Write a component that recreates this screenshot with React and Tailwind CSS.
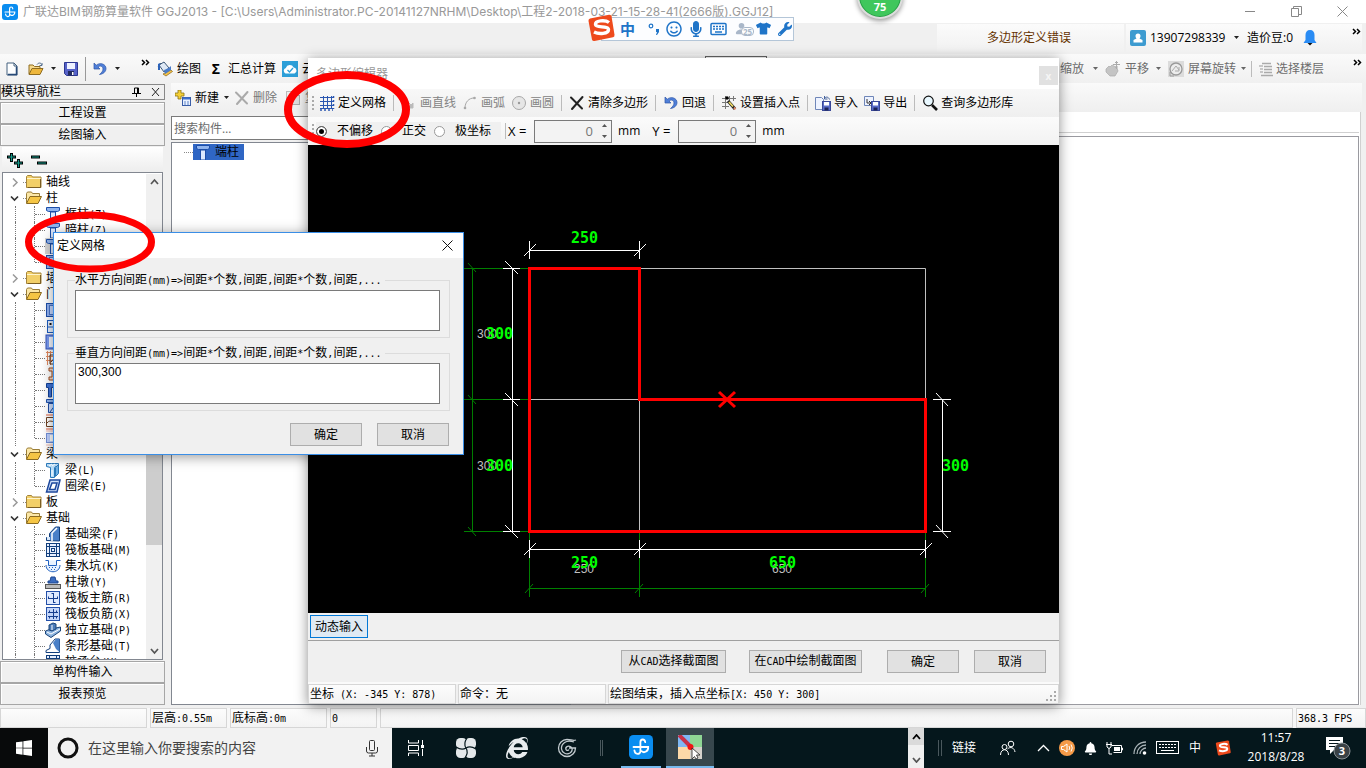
import React from 'react';
import { FaTshirt, FaWrench, FaMicrophone, FaInternetExplorer, FaBell, FaRegSmile } from 'react-icons/fa';
import { BsPersonFill, BsWindows } from 'react-icons/bs';

/* ---------- small helpers ---------- */

// latin runs are set in a narrow mono face, half as wide as the hanzi beside them
function Song({ children }) {
  return String(children).split(/([\x20-\x7e]+)/).map((part, i) =>
    /^[\x20-\x7e]+$/.test(part)
      ? <span key={i} className="font-['DejaVu_Sans_Mono',monospace] text-[10px] whitespace-pre">{part}</span>
      : part
  );
}

function Svg({ w = 16, h = 16, children, className = '' }) {
  return (
    <svg width={w} height={h} viewBox={`0 0 ${w} ${h}`} fill="none" className={`shrink-0 ${className}`} aria-hidden="true">
      {children}
    </svg>
  );
}

const Caret = ({ color = '#222' }) => (
  <Svg w={7} h={4}><path d="M1 0h5L3.500 3z" fill={color} /></Svg>
);

const More = () => (
  <Svg w={9} h={8}><path d="M1 1l2.500 2.500L1 6M5 1l2.500 2.500L5 6" stroke="#000" strokeWidth="1.500" /></Svg>
);

const Sep = () => <span className="mx-1 h-4 w-px shrink-0 bg-[#bbb]" />;

const Grip = () => (
  <Svg w={3} h={16} className="ml-1 mr-px">
    <path d="M1 1v14" stroke="#aaa" strokeWidth="2" strokeDasharray="2 2" />
  </Svg>
);

/* ---------- icons ---------- */

const AppIcon = ({ size = 16 }) => (
  <svg width={size} height={size} viewBox="0 0 16 16" fill="none" className="shrink-0" aria-hidden="true">
    <rect width="16" height="16" rx="3" fill="#0a8df0" />
    <path d="M10.800 4.800c-.2-2.400-3.200-2.400-3.200 0v5.800c0 2.800-3.800 2.600-4-.4M3 8h9.800c.2 2.800-2.600 4.400-4.400 2.800" stroke="#fff" strokeWidth="1.200" strokeLinecap="round" />
  </svg>
);

const NewDoc = () => (
  <Svg><path d="M3 2h7l3 3v9H3z" fill="#fdfeff" stroke="#45607f" /><path d="M10 2v3h3" stroke="#45607f" /><path d="M12.500 5.500v8H4" stroke="#274a78" strokeWidth="1.500" /></Svg>
);

const OpenDoc = () => (
  <Svg><path d="M1 13V4h4l1.500 1.500H12V8" fill="#f7d98a" stroke="#8f6c20" /><path d="M1 13.500L4 7.500h11l-3 6z" fill="#eeb73c" stroke="#8f6c20" /><path d="M9 3.500c1.500-2 4-2 5 .5m0-2v2.500h-2.500" stroke="#56708f" /></Svg>
);

const Save = () => (
  <Svg><path d="M1.500 1.500h13v13h-11l-2-2z" fill="#5662c8" stroke="#2c3690" /><path d="M4 2h8v6H4z" fill="#eef2ff" /><path d="M5 10h6v4.500H5z" fill="#222b60" /><path d="M9 11h1.500v3H9z" fill="#fff" /></Svg>
);

const Undo = () => (
  <Svg><path d="M2 2v6h6L6 6c2-1.800 5-.8 5 2 0 2-1.500 4-3.500 5.500C11.500 13 14 10.500 14 7.500 14 3 8 1 4.300 4.200z" fill="#4f7fd8" stroke="#2c55a8" strokeWidth=".7" /></Svg>
);

const Paint = () => (
  <Svg><path d="M2 4l5-3 5 6-5 4z" fill="#dfe9f5" stroke="#3c5878" /><path d="M2 4v5M4 2L1 6" stroke="#3c5878" /><path d="M1 3l2-1v7H1z" fill="#2c62b8" /><path d="M6 13l8-4 1.500 1.500L9 15z" fill="#f2c14a" stroke="#8a6412" strokeWidth=".7" /><path d="M7 9c2-1 4-1 7-4v4l-6 4z" fill="#4a7cc8" /></Svg>
);

const CloudCheck = () => (
  <Svg><rect width="16" height="16" fill="#2d9fd8" /><path d="M3.500 12.500a3 3 0 01.3-5.600 4.200 4.200 0 017.800-.4 3.100 3.100 0 01.9 6z" fill="#fff" /><path d="M5.500 9l2 2 3.500-4" stroke="#2d9fd8" strokeWidth="1.300" /></Svg>
);

const NewItem = () => (
  <Svg><path d="M3 0h3v3h3v3H6v3H3V6H0V3h3z" fill="#f4cf37" stroke="#8b7414" strokeWidth=".8" /><rect x="7.500" y="7.500" width="8" height="8" fill="#eaf2ff" stroke="#3a5ea8" /><path d="M8 8.500h7" stroke="#3a6fd0" strokeWidth="2" /><path d="M9 12h2m1 0h2m-5 2h2m1 0h2" stroke="#5f84c8" /></Svg>
);

const Cross = ({ color = '#222' }) => (
  <Svg><path d="M2 2.500l11 11M13.500 2L3 14" stroke={color} strokeWidth="2" strokeLinecap="round" /></Svg>
);

const CopyIcon = () => (
  <Svg><rect x="1.500" y="1.500" width="9" height="9" fill="#eee" stroke="#bbb" /><rect x="5.500" y="5.500" width="9" height="9" fill="#ddd" stroke="#aaa" /></Svg>
);

const Hand = () => (
  <Svg><path d="M1 8l3-3 1 1 2-2 2 1 3 2 1 3-3 5H5l-4-4z" fill="#c4c4c4" stroke="#aaa" strokeWidth=".7" /><path d="M11.500 0v8M8 3.500h7M10 1.500h3M10 6h3" stroke="#aaa" /></Svg>
);

const Rotate = () => (
  <Svg><rect width="16" height="16" fill="#dcdcdc" /><circle cx="8" cy="8" r="6" stroke="#999" strokeWidth="1.300" fill="#ececec" /><path d="M4 10l4-5 3 4M11 6v4H7" stroke="#aaa" /><path d="M2 11v4h4" stroke="#999" /></Svg>
);

const Floors = () => (
  <Svg><path d="M4 2.500h9M6 5.500h8M6 8.500h8M6 11.500h8M3 14.500h12" stroke="#aaa" strokeWidth="1.500" /><path d="M1 5h4M2 8h3M2 11h3" stroke="#999" /></Svg>
);

const GridIcon = () => (
  <Svg><path d="M4.500 1v13M8.500 1v13M12.500 1v13M1 2.500h13M1 6.500h13M1 10.500h13M1 13.500h13" stroke="#2a56b0" /><path d="M14.500 1v13M1 15h13" stroke="#2a56b0" strokeWidth="1.500" strokeDasharray="2 2" /></Svg>
);

const LineIcon = () => <Svg><path d="M2 2l9 9M12 8v5H7z" stroke="#bbb" fill="#bbb" /></Svg>;
const ArcIcon = () => <Svg><path d="M3 13C3 7 7 3 12 3" stroke="#a8a8a8" /><circle cx="3" cy="13" r="1.300" fill="#a8a8a8" /><circle cx="12.500" cy="3" r="1.300" fill="#a8a8a8" /></Svg>;
const CircleIcon = () => <Svg><circle cx="8" cy="8" r="6.500" fill="#e6e6e6" stroke="#a8a8a8" /><circle cx="8" cy="8" r="1.200" fill="#999" /></Svg>;

const InsertPoint = () => (
  <Svg><path d="M4.500 1v13M8.500 1v8M1 3.500h14M1 7.500h6M1 11.500h7M12.500 1v5" stroke="#777" /><circle cx="6" cy="3" r="1.800" fill="#000" /><path d="M7 6l7 8" stroke="#222" strokeWidth="3" /><path d="M8 7l4 4.500" stroke="#f0dc66" strokeWidth="1.800" /><path d="M13 12.500l1.500 1.800" stroke="#e08a6a" strokeWidth="2" /></Svg>
);

const ImportIcon = ({ out }) => (
  <Svg><path d={out ? 'M.5 1.500h9v9h-9z' : 'M.5 2.500h6l2 2v10h-8z'} fill="#eef3ff" stroke="#6f86b8" /><rect x="7.500" y="6.500" width="8" height="9" fill="#5a6cc8" stroke="#3a4898" /><rect x="9" y="7" width="5" height="3.500" fill="#fff" /><rect x="9.500" y="12.500" width="4" height="3" fill="#1c2458" />{out ? <path d="M3 4v4h4m-2-2l2 2-2 2" stroke="#333" /> : <path d="M9.500 3.500c1-2 4-2 5 1M9.500 1v3h3" stroke="#45629c" />}</Svg>
);

const Magnifier = () => (
  <Svg><circle cx="6.500" cy="6" r="4.800" fill="#e9f8ff" stroke="#111" strokeWidth="1.200" /><path d="M10 10l5 5" stroke="#111" strokeWidth="2.600" /></Svg>
);

function Chevron({ open }) {
  return open
    ? <Svg w={9} h={9}><path d="M1 2.500l3.500 3.500L8 2.500" stroke="#333" strokeWidth="1.700" /></Svg>
    : <Svg w={9} h={9}><path d="M3 .5l4 4-4 4" stroke="#999" strokeWidth="1.500" /></Svg>;
}

function Folder({ open }) {
  return open ? (
    <Svg><path d="M.5 13V3.500l1-1.500h4l1 1.500h7V7" fill="#fbe7a8" stroke="#9a7d36" /><path d="M.5 13.500L4 6.500h11.500l-3.500 7z" fill="#f5c544" stroke="#8a6a22" /></Svg>
  ) : (
    <Svg><path d="M.5 13.500V2.500l1-1h4l1 1.500h8.500v10.500z" fill="#f2cf68" stroke="#a5843a" /><path d="M1 4.500h13.500" stroke="#fff4cc" /><path d="M14.500 5v8.500H2" stroke="#7c5f24" /></Svg>
  );
}

// drawings for the members in the tree
const memberIcons = {
  column: <><path d="M1.500 1.500h13v3l-2 1h-9l-2-1z" fill="#8fb4ee" stroke="#1d4ea8" /><path d="M5.500 6h5v10h-5z" fill="#dce9ff" stroke="#1d4ea8" /></>,
  box: <><rect x="1.500" y="1.500" width="13" height="13" fill="#8fb0f0" stroke="#1d4ea8" /><rect x="4.500" y="3.500" width="8" height="9" fill="#c5d8ff" stroke="#4a76c8" /></>,
  door: <><rect x="2.500" y="2.500" width="12" height="12" fill="#e8f1ff" stroke="#1d5cc0" /><path d="M2 9h13" stroke="#1d5cc0" /><path d="M4.500 6h2" stroke="#111" strokeWidth="2" /></>,
  windowed: <><rect x="1" y="1" width="14" height="14" fill="#7a9bf0" stroke="#3252b8" /><rect x="4" y="3" width="8" height="10" fill="#f4f7ff" /></>,
  hatch: <><path d="M1 2.500h14M1 6.500h14M1 10.500h14M2.500 1v14M5.500 1v14" stroke="#e08a60" /><path d="M5 14V5h9v9zM6 12l6-7" stroke="#5a3a24" /></>,
  ibeam: <path d="M4 2h11v3h-4v6h4v3H4v-3h3V5H4z" fill="#f8dcc8" stroke="#a04c20" />,
  post: <path d="M1.500 1.500h13v4h-8V15h-3V5.500h-2z" fill="#3f74d8" stroke="#123f94" />,
  lintel: <><path d="M1.500 1.500h13v3h-13z" fill="#8fb4ee" stroke="#1d4ea8" /><path d="M3.500 5.500h11v9h-11zM5 14l6-8" fill="#cfe0ff" stroke="#1d4ea8" /></>,
  slab: <><path d="M1 1h14M1 15h14" stroke="#f0b0a0" strokeWidth="2" /><path d="M1.500 3.500h13v9h-13zM2 9c4-5 6 2 12-4" stroke="#6e4020" /></>,
  panel: <><path d="M1 1h14M1 15h14" stroke="#f0b8b0" /><rect x="1.500" y="3.500" width="13" height="9" fill="#bcd0ff" stroke="#7390d8" /><rect x="5" y="5" width="8" height="6" fill="#fff" /></>,
  beam: <><path d="M1.500 1.500h12v3h-3l-1 1v10h-4v-10l-4-1z" fill="#b8dcf8" stroke="#2a78b8" /><path d="M10.500 5.500l3-3v9l-3 3z" fill="#6fb0e4" stroke="#2a78b8" /><path d="M4 4l3-2M7 4l3-2M7 8v6" stroke="#fff" /></>,
  ring: <path d="M5 2h10l-3 12H1.500zM7 5h5l-2 6.500H4.500z" fill="#cfe0fb" fillRule="evenodd" stroke="#1d479c" strokeWidth="1.500" />,
  foundBeam: <><path d="M1.500 14.500v-3h3v-4l6-6.500h4v14z" fill="#4a80c8" stroke="#123f7c" /><path d="M7 15V7l5-5" stroke="#fff" strokeWidth="1.500" /><path d="M2 14h3v-3H2z" fill="#d8e8fa" /></>,
  raft: <><rect x="1.500" y="1.500" width="13" height="13" fill="#e8f0ff" stroke="#123f7c" /><path d="M1 4.500h14M1 11.500h14M4.500 1v14M11.500 1v14" stroke="#123f7c" /><rect x="6.500" y="6.500" width="3" height="3" stroke="#123f7c" /></>,
  pit: <><path d="M.5 2.500h3v5h8v-5h4M1 7c0 9 14 9 14 0" stroke="#2060c0" fill="#e8f2ff" /><path d="M4 9.500h1m2 0h1m2 0h1M6 11.500h1m2 0h1" stroke="#2060c0" /></>,
  pier: <><path d="M6 3h4l1 4h2v2H3V7h2z" fill="#3a6cc0" stroke="#1d4690" /><rect x=".5" y="10.500" width="15" height="4" fill="#bbb" stroke="#555" /></>,
  mainBar: <><rect x="1.500" y="1.500" width="13" height="13" fill="#dfeaff" stroke="#2450a8" /><path d="M3 8.500h10M3.500 6.500v2M12.500 8.500v-2M8.500 3v10M8.500 3.500h-2M8.500 12.500h2" stroke="#173f90" /></>,
  negBar: <><rect x="1.500" y="1.500" width="13" height="13" fill="#c4d6fa" stroke="#2450a8" /><path d="M3 6.500h10M3 10.500h10M8.500 3v10M4.500 4.500v2M11.500 4.500v2M4.500 10.500v2M11.500 10.500v2" stroke="#173f90" /></>,
  isolated: <><path d="M.5 9L6 7l9.500-2v4L6 15.500.5 12z" fill="#8cb4e0" stroke="#1a4478" /><path d="M4 8V3l4-2 3 1v5l-4 2z" fill="#4a7ab8" stroke="#1a4478" /><path d="M2 10l4 2 9-5M7 3v5" stroke="#fff" /></>,
  strip: <><path d="M1 14.500v-2l4-2V7l5-6h4.500v13.500z" fill="#fff" stroke="#123f7c" /><path d="M8 5l3-4h3.500v13L11 11z" fill="#4a80c8" /></>,
};

const MemberIcon = ({ name }) => <Svg>{memberIcons[name]}</Svg>;

const SogouLogo = ({ size = 28 }) => (
  <svg width={size} height={size} viewBox="0 0 28 28" fill="none" className="relative shrink-0" aria-hidden="true">
    <path d="M3 4.500L22 .8q2-.3 2.500 1.500l3 18.500q.3 2-1.500 2.500L7.500 27q-2 .3-2.500-1.500L1.500 7q-.3-2 1.500-2.500z" fill="#ee4a1c" />
    <path d="M22 8.500C18 5.500 8 6.500 8.500 10.500c.4 3.600 13 1 13 5 0 4.500-9.500 5-14.500 2.500" stroke="#fff" strokeWidth="3.400" />
  </svg>
);

const ImeKeyboard = () => (
  <Svg w={17} h={14}><rect x="1" y="1.500" width="15" height="11" rx="1" stroke="#1e74c8" strokeWidth="1.500" /><path d="M3 4.500h11M3 7h11" stroke="#1e74c8" strokeWidth="1.500" strokeDasharray="2 1" /><path d="M5 10h7" stroke="#1e74c8" strokeWidth="1.500" /></Svg>
);

/* ---------- data ---------- */

const tree = [
  { label: '轴线' },
  { label: '柱', open: true, items: [['column', '框柱(Z)'], ['column', '暗柱(Z)'], ['column', '', true], ['box', '']] },
  { label: '墙' },
  {
    label: '门', open: true,
    items: [['box', ''], ['door', ''], ['windowed', ''], ['hatch', ''], ['ibeam', ''], ['post', ''], ['lintel', ''], ['slab', ''], ['panel', '']],
  },
  { label: '梁', open: true, items: [['beam', '梁(L)'], ['ring', '圈梁(E)']] },
  { label: '板' },
  {
    label: '基础', open: true, more: true,
    items: [
      ['foundBeam', '基础梁(F)'], ['raft', '筏板基础(M)'], ['pit', '集水坑(K)'], ['pier', '柱墩(Y)'],
      ['mainBar', '筏板主筋(R)'], ['negBar', '筏板负筋(X)'], ['isolated', '独立基础(P)'], ['strip', '条形基础(T)'],
      ['raft', '桩承台(V)'],
    ],
  },
];

/* ---------- main window ---------- */

function TitleBar() {
  return (
    <header className="flex h-[23px] shrink-0 items-center bg-white pl-0.5 text-[#999]">
      <AppIcon />
      <h1 className="ml-[5px] font-[Inter,'Noto_Sans_CJK_SC',sans-serif] whitespace-nowrap">
        广联达BIM钢筋算量软件 GGJ2013 - [C:\Users\Administrator.PC-20141127NRHM\Desktop\工程2-2018-03-21-15-28-41(2666版).GGJ12]
      </h1>
      <div className="ml-auto flex items-center gap-[35px] pr-[18px]">
        <button aria-label="最小化"><Svg w={11} h={11}><path d="M0 5.500h10" stroke="#888" /></Svg></button>
        <button aria-label="还原"><Svg w={11} h={11}><path d="M.5 2.500h7v8h-7zM2.500 2.500v-2h8v8h-3" stroke="#888" /></Svg></button>
        <button aria-label="关闭"><Svg w={11} h={11}><path d="M.5.500l10 10M10.500.500l-10 10" stroke="#888" /></Svg></button>
      </div>
    </header>
  );
}

function AccountRow() {
  return (
    <div className="flex h-[31px] shrink-0 justify-end gap-0.5 bg-[#f0f0f0] pr-1 pt-px pb-0.5">
      <div className="flex w-[187px] items-center bg-linear-to-b from-[#fbfbfb] to-[#f1f1f1] pl-[50px] text-[#630]">多边形定义错误</div>
      <div className="flex w-[236px] items-center bg-linear-to-b from-[#fbfbfb] to-[#f1f1f1] pl-1">
        <Svg><rect width="16" height="16" rx="2" fill="#3d9bd0" /><path d="M5.500 6a2.500 2.500 0 015 0c0 1-.5 2-1 2.500l3 1.500v2.500h-9V10l3-1.500C6 8 5.500 7 5.500 6z" fill="#fff" /></Svg>
        <span className="ml-1 w-[79px]">13907298339</span>
        <span className="mr-[7px] ml-1"><Caret /></span>
        <span className="w-[56px]">造价豆:0</span>
        <Svg w={14} h={16}><path d="M7 0C4 0 2.500 2 2.500 5v5L.500 13h13l-2-3V5C11.500 2 10 0 7 0z" fill="#2a8cf4" /><path d="M4.500 13h5L7 15.500z" fill="#111" /></Svg>
        <span className="mr-px mb-3 ml-auto"><More /></span>
      </div>
    </div>
  );
}

function MainToolbar() {
  return (
    <div className="flex h-[29px] shrink-0 bg-linear-to-b from-[#fafafa] to-[#f0f0f0]">
      <div className="flex w-[153px] shrink-0 items-center pl-1">
        <button aria-label="新建"><NewDoc /></button>
        <button aria-label="打开" className="ml-2"><OpenDoc /></button>
        <span className="ml-1.5"><Caret /></span>
        <button aria-label="保存" className="ml-1.5"><Save /></button>
        <span className="ml-1.5 h-6 w-px bg-[#999]" />
        <button aria-label="撤销" className="ml-1.5"><Undo /></button>
        <span className="ml-1.5"><Caret /></span>
        <span className="mb-3 ml-5"><More /></span>
      </div>
      <div className="flex w-[552px] shrink-0 items-center pl-1 whitespace-nowrap">
        <button className="flex items-center gap-1"><Paint />绘图</button>
        <button className="ml-2.5 flex items-center gap-[7px]"><span className="w-2.5 text-sm font-bold">Σ</span>汇总计算</button>
        <button className="ml-1.5 flex items-center gap-1"><CloudCheck />云</button>
      </div>
      <div className="mt-0.5 h-[22px] w-[62px] border border-[#666] bg-white" />
      <div className="ml-auto flex items-center pr-1 text-[#6d6d6d]">
        <button className="flex items-center gap-2">缩放 <Caret color="#666" /></button>
        <button className="ml-1.5 flex items-center gap-1"><Hand />平移 <span className="ml-0.5"><Caret color="#666" /></span></button>
        <button className="ml-1.5 flex items-center gap-1"><Rotate />屏幕旋转<Caret color="#666" /></button>
        <Sep />
        <button className="ml-0.5 flex items-center gap-0.5"><Floors />选择楼层</button>
        <span className="mb-3 ml-[29px]"><More /></span>
      </div>
    </div>
  );
}

const NavButton = ({ children }) => (
  <button className="h-[22px] shrink-0 border border-[#a6a6a6] bg-[#f0f0f0] text-center shadow-[inset_1px_1px_0_#fff]">{children}</button>
);

function TreeGroup({ group }) {
  const items = group.items || [];
  return (
    <li>
      <div className="flex h-4 items-center pl-[7px]">
        <Chevron open={group.open} />
        <span className="ml-1 w-[3px] border-t border-dotted border-[#888]" />
        <Folder open={group.open} />
        <span className="ml-1">{group.label}</span>
      </div>
      {items.length > 0 && (
        <ul>
          {items.map(([icon, label, selected], i) => (
            <li key={i} className="flex h-4 items-center whitespace-nowrap">
              <span className="ml-3 h-4 w-[19px] shrink-0 border-l border-dotted border-[#777]" />
              <span className={`w-[11px] shrink-0 self-start border-l border-dotted border-[#777] ${i === items.length - 1 && !group.more ? 'h-2' : 'h-4'}`}>
                <span className="mt-2 block border-t border-dotted border-[#777]" />
              </span>
              <span className={selected ? 'bg-[#d4d4d4]' : ''}><MemberIcon name={icon} /></span>
              <span className="ml-1"><Song>{label}</Song></span>
            </li>
          ))}
        </ul>
      )}
    </li>
  );
}

function NavPanel() {
  return (
    <aside className="flex w-[165px] shrink-0 flex-col pt-px">
      <div className="mb-0.5 flex h-4 shrink-0 items-center border border-[#888] bg-[#f0f0f0] leading-3">
        模块导航栏
        <span className="ml-auto flex gap-2.5 pr-1">
          <Svg w={9} h={10}><path d="M2.500 1h4v5M2.500 1v5M0 6.500h9M4.500 7v3M5.500 1v5" stroke="#000" /></Svg>
          <Svg w={9} h={10}><path d="M1 1l7 8M8 1L1 9" stroke="#222" /></Svg>
        </span>
      </div>
      <NavButton>工程设置</NavButton>
      <NavButton>绘图输入</NavButton>
      <div className="mx-0.5 mt-px flex h-[25px] shrink-0 items-center gap-1.5 bg-linear-to-b from-white to-[#ededed] pl-1">
        <Svg w={18}><path d="M1 5h9M5.500 1v9M8 11h9M12.500 7v9" stroke="#000" strokeWidth="3" /><path d="M2 5h7M5.500 2v7M9 11h7M12.500 8v7" stroke="#139a8a" strokeWidth="1.200" /></Svg>
        <Svg w={18}><path d="M1 5h9M7 11h10" stroke="#000" strokeWidth="3" /><path d="M2 5h7M8 11h8" stroke="#139a8a" strokeWidth="1.200" /></Svg>
      </div>
      <div className="mx-0.5 mb-px flex min-h-0 flex-1 overflow-hidden border border-[#828790] bg-white pt-px">
        <ul className="min-w-0 flex-1 overflow-hidden">
          {tree.map((group) => <TreeGroup key={group.label} group={group} />)}
        </ul>
        <div className="flex w-4 flex-col items-center bg-[#f0f0f0]">
          <Svg w={9} h={16}><path d="M1 10l3.500-4L8 10" stroke="#555" strokeWidth="1.700" /></Svg>
          <div className="mt-[100px] h-[255px] w-4 bg-[#cdcdcd]" />
          <Svg w={9} h={16} className="mt-auto"><path d="M1 6l3.500 4L8 6" stroke="#555" strokeWidth="1.700" /></Svg>
        </div>
      </div>
      <NavButton>单构件输入</NavButton>
      <NavButton>报表预览</NavButton>
    </aside>
  );
}

function WorkArea() {
  return (
    <main className="ml-1.5 flex min-w-0 flex-1 flex-col pr-1">
      <div className="flex h-[29px] shrink-0 items-center bg-linear-to-b from-[#fafafa] to-[#efefef] pl-1">
        <button className="flex items-center gap-1"><NewItem />新建<Caret /></button>
        <button className="ml-1 flex items-center gap-[3px] text-[#777]"><Cross color="#aaa" />删除</button>
        <button className="ml-2 flex items-center gap-1 text-[#777]"><CopyIcon />复制</button>
      </div>
      <div className="flex min-h-0 flex-1">
        <section className="flex w-[400px] shrink-0 flex-col pt-1">
          <input aria-label="搜索构件" placeholder="搜索构件…" className="h-6 shrink-0 border border-[#7a7a7a] bg-white px-0.5 placeholder:text-[#6d6d6d]" />
          <ul className="mt-0.5 flex-1 border border-[#828790] bg-white pt-px pl-3">
            <li className="flex h-4 items-center">
              <span className="w-[9px] border-t border-dotted border-[#888]" />
              <span className="flex items-center bg-[#2f66c4] pr-[5px] pl-0.5"><MemberIcon name="column" /><span className="ml-1">端柱</span></span>
            </li>
          </ul>
        </section>
        <section className="mr-px flex flex-1 flex-col border-r border-[#d0d0d0] bg-white pr-px">
          <div className="mb-[3px] h-[21px] shrink-0 border-b border-[#d0d0d0]" />
          <div className="flex-1 border border-[#9a9aa0]" />
        </section>
      </div>
    </main>
  );
}

function StatusCell({ className, children }) {
  return <div className={`border border-[#d6d6d6] bg-linear-to-b from-[#fcfcfc] to-[#f3f3f3] px-px leading-[18px] whitespace-pre ${className}`}>{children}</div>;
}

function StatusBar() {
  return (
    <footer className="flex h-5 shrink-0 gap-[3px] bg-[#f7f7f7]">
      <StatusCell className="w-[147px]" />
      <StatusCell className="w-[77px]"><Song>层高:0.55m</Song></StatusCell>
      <StatusCell className="w-[97px]"><Song>底标高:0m</Song></StatusCell>
      <StatusCell className="w-[47px]"><Song>0</Song></StatusCell>
      <StatusCell className="flex-1" />
      <StatusCell className="w-[70px]"><Song>368.3 FPS</Song></StatusCell>
    </footer>
  );
}

/* ---------- polygon editor ---------- */

const ToolButton = ({ icon, children, disabled }) => (
  <button disabled={disabled} className="flex shrink-0 items-center gap-[3px] px-[3px] disabled:text-[#838383]">{icon}{children}</button>
);

function OffsetRadio({ label, checked, className = '' }) {
  return (
    <label className={`flex items-center ${className}`}>
      <input
        type="radio" name="offset" defaultChecked={checked}
        className="mr-2.5 size-[11px] appearance-none rounded-full border border-[#999] bg-white checked:border-[#666] checked:bg-black checked:shadow-[inset_0_0_0_2px_#fff]"
      />
      {label}
    </label>
  );
}

function Spin({ id, label }) {
  return (
    <div className="flex items-center">
      <label htmlFor={id} className="w-[26px] text-[13px] whitespace-nowrap">{label} =</label>
      <div className="flex h-[23px] w-[78px] items-center border border-[#7a7a7a] bg-[#f3f3f3] pr-[3px]">
        <input id={id} defaultValue="0" className="w-0 min-w-0 flex-1 bg-transparent pr-2 text-right text-[13px] text-[#777]" />
        <span className="flex flex-col gap-2">
          <button aria-label={`${label} +`}><Svg w={7} h={4}><path d="M1 4h5L3.500 1z" fill="#555" /></Svg></button>
          <button aria-label={`${label} -`}><Svg w={7} h={4}><path d="M1 0h5L3.500 3z" fill="#555" /></Svg></button>
        </span>
      </div>
      <span className="ml-1.5">mm</span>
    </div>
  );
}

function Drawing() {
  return (
    <svg viewBox="0 0 751 468" className="block w-full bg-black" fill="none" role="img" aria-label="截面图">
      {/* axis dimensions */}
      <g stroke="#008000">
        <path d="M156 123.500h65M156 254.500h65M156 386.500h65M164.500 123v264" />
        <path d="M160 118l8 9M160 250l8 9M160 382l8 9" />
        <path d="M221.500 386v66M331.500 386v66M617.500 386v66M221 443.500h397" />
        <path d="M217 448l8-9M327 448l8-9M613 448l8-9" />
      </g>
      {/* grid */}
      <path d="M331 123.500h286.500v131M221 254.500h110.500v132" stroke="#c0c0c0" />
      {/* grey dimension texts */}
      <g fill="#c0c0c0" className="font-['Liberation_Sans',sans-serif] text-xs">
        <text x="169" y="193">300</text>
        <text x="169" y="325">300</text>
        <text x="276" y="428" textAnchor="middle">250</text>
        <text x="474" y="428" textAnchor="middle">650</text>
      </g>
      {/* edge dimensions */}
      <g stroke="#fff">
        <path d="M221 105.500h111M221.500 96v18M331.500 96v18M216 111l12-12M326 111l12-12" />
        <path d="M204.500 123v264M195 123.500h17M195 254.500h17M195 386.500h17M197 116l13 13M197 248l13 13M197 380l13 13" />
        <path d="M221 404.500h397M221.500 395v18M331.500 395v18M617.500 395v18M216 410l12-12M326 410l12-12M612 410l12-12" />
        <path d="M634.500 254v133M625 254.500h18M625 386.500h18M628 248l12 13M628 380l12 13" />
      </g>
      {/* polygon and insertion point */}
      <path d="M221.500 123.500h110v131h286v132h-396z" stroke="#f00" strokeWidth="3" />
      <path d="M411 247l16 15M427 247l-16 15" stroke="#f00" strokeWidth="3" />
      <g fill="#0f0" className="font-['DejaVu_Sans_Mono',monospace] text-[15px] font-bold">
        <text x="263" y="98">250</text>
        <text x="178" y="194">300</text>
        <text x="178" y="326">300</text>
        <text x="634" y="326">300</text>
        <text x="263" y="423">250</text>
        <text x="461" y="423">650</text>
      </g>
    </svg>
  );
}

const PushButton = ({ children, className }) => (
  <button className={`h-[23px] border border-[#adadad] bg-[#e1e1e1] whitespace-nowrap ${className}`}>{children}</button>
);

function PolygonEditor() {
  return (
    <section className="absolute top-[58px] left-[308px] w-[751px] bg-[#f0f0f0] shadow-[0_2px_12px_rgba(0,0,0,0.45)]">
      <div className="flex h-[31px] items-center bg-white pl-2 text-[#999]">
        多边形编辑器
        <button aria-label="关闭" className="mt-1 mr-px ml-auto size-[19px] bg-[#e1e1e1] text-[10px] leading-[18px] font-bold text-[#f5f5f5]">x</button>
      </div>
      <div className="flex h-7 items-center bg-linear-to-b from-[#f8f8f8] to-[#efefef]">
        <Grip />
        <ToolButton icon={<GridIcon />}>定义网格</ToolButton>
        <Sep />
        <ToolButton icon={<LineIcon />} disabled>画直线</ToolButton>
        <ToolButton icon={<ArcIcon />} disabled>画弧</ToolButton>
        <ToolButton icon={<CircleIcon />} disabled>画圆</ToolButton>
        <Sep />
        <ToolButton icon={<Cross />}>清除多边形</ToolButton>
        <Sep />
        <ToolButton icon={<Undo />}>回退</ToolButton>
        <Sep />
        <ToolButton icon={<InsertPoint />}>设置插入点</ToolButton>
        <Sep />
        <ToolButton icon={<ImportIcon />}>导入</ToolButton>
        <ToolButton icon={<ImportIcon out />}>导出</ToolButton>
        <Sep />
        <ToolButton icon={<Magnifier />}>查询多边形库</ToolButton>
      </div>
      <div className="flex h-7 items-center bg-linear-to-b from-[#fbfbfb] to-[#f2f2f2]">
        <Grip />
        <div className="flex h-[18px] items-center bg-[#f0f0f0] pr-2.5">
          <OffsetRadio label="不偏移" checked />
          <OffsetRadio label="正交" className="ml-2" />
          <OffsetRadio label="极坐标" className="ml-2" />
        </div>
        <span className="mr-0.5 ml-1 h-4 w-px bg-[#bbb]" />
        <Spin id="x" label="X" />
        <span className="w-3" />
        <Spin id="y" label="Y" />
      </div>
      <Drawing />
      <div className="flex h-7 items-center border-b border-[#a0a0a0] pl-0.5">
        <button className="h-[23px] border border-[#0078d7] bg-[#dfeaf4] px-1">动态输入</button>
      </div>
      <div className="flex h-[41px] items-center justify-end pr-[13px]">
        <PushButton className="mr-[23px] w-[105px]"><Song>从CAD选择截面图</Song></PushButton>
        <PushButton className="mr-[25px] w-[113px]"><Song>在CAD中绘制截面图</Song></PushButton>
        <PushButton className="mr-[15px] w-[72px]">确定</PushButton>
        <PushButton className="w-[72px]">取消</PushButton>
      </div>
      <div className="flex h-[22px] gap-0.5 border-t-2 border-[#fafafa]">
        <StatusCell className="w-[148px]"><Song>坐标 (X: -345 Y: 878)</Song></StatusCell>
        <StatusCell className="w-[148px]">命令：无</StatusCell>
        <StatusCell className="flex flex-1 items-center justify-between">
          <span><Song>绘图结束，插入点坐标[X: 450 Y: 300]</Song></span>
          <Svg w={12} h={12} className="self-end"><path d="M9 1h2M5 5h2M9 5h2M1 9h2M5 9h2M9 9h2" stroke="#aaa" strokeWidth="2" /></Svg>
        </StatusCell>
      </div>
    </section>
  );
}

/* ---------- grid dialog ---------- */

function SpacingField({ id, label, value }) {
  return (
    <fieldset className="mb-[7px] border border-[#dcdcdc] pt-0.5 pr-[9px] pb-1.5 pl-[7px]">
      <legend className="h-4 pr-1 whitespace-nowrap"><label htmlFor={id}><Song>{label}</Song></label></legend>
      <textarea
        id={id} defaultValue={value}
        className="block h-[41px] w-full resize-none border border-[#7a7a7a] bg-white px-0.5 font-['Liberation_Sans','Noto_Sans_CJK_SC',sans-serif] leading-4"
      />
    </fieldset>
  );
}

function GridDialog() {
  return (
    <section role="dialog" aria-label="定义网格" className="absolute top-[232px] left-[53px] w-[411px] border border-[#3a8ee6] bg-[#f0f0f0] shadow-[0_2px_12px_rgba(0,0,0,0.4)]">
      <div className="flex h-[25px] items-center justify-between bg-white pr-2.5 pl-[3px]">
        定义网格
        <button aria-label="关闭"><Svg w={11} h={11}><path d="M.5.500l10 10M10.500.500l-10 10" stroke="#111" /></Svg></button>
      </div>
      <div className="px-[13px] pt-3.5 pb-2">
        <SpacingField id="horizontal" label="水平方向间距(mm)=>间距*个数,间距,间距*个数,间距,..." value="" />
        <SpacingField id="vertical" label="垂直方向间距(mm)=>间距*个数,间距,间距*个数,间距,..." value="300,300" />
        <div className="flex justify-end gap-[15px] pt-[5px] pr-px">
          <PushButton className="w-[72px]">确定</PushButton>
          <PushButton className="w-[72px]">取消</PushButton>
        </div>
      </div>
    </section>
  );
}

/* ---------- floating things ---------- */

function ImeBar() {
  return (
    <div className="absolute top-[14px] left-[587px] flex items-center">
      <span className="z-10"><SogouLogo /></span>
      <div className="mt-px -ml-3.5 flex h-6 w-[193px] items-center border border-[#b4c6d8] bg-[#fcfdff] pl-[18px] text-[#1e74c8]">
        <span className="w-[26px] text-[15px] font-bold">中</span>
        <Svg w={12} h={14} className="mr-1.5 ml-0.5"><circle cx="3" cy="4" r="1.800" stroke="#1e74c8" strokeWidth="1.200" /><path d="M8 7h3v3l-2 3H8l1-3H8z" fill="#1e74c8" /></Svg>
        <FaRegSmile size={16} className="mr-1.5 shrink-0" />
        <FaMicrophone size={16} className="mr-1.5 shrink-0" />
        <ImeKeyboard />
        <span className="mr-0.5 ml-[7px] flex items-end text-[#a9b7c9]"><BsPersonFill size={15} /><span className="-ml-2 rounded-sm border border-current bg-white px-px text-[8px] leading-[7px] font-bold">25</span></span>
        <FaTshirt size={15} className="mr-[7px] shrink-0" />
        <FaWrench size={14} className="shrink-0" />
      </div>
    </div>
  );
}

function Ball() {
  return (
    <div className="absolute -top-[27px] left-[857px] flex size-[46px] items-end justify-center rounded-full border-2 border-[#ddd] bg-[#3fc75c] pb-1 text-[11px] leading-3 font-bold text-white shadow-[0_2px_5px_rgba(0,0,0,0.4),inset_0_0_0_1px_#2a9c48]">
      75
    </div>
  );
}

function Marks() {
  return (
    <svg className="pointer-events-none absolute top-0 left-0" width="420" height="280" viewBox="0 0 420 280" fill="none" stroke="#f00" aria-hidden="true">
      <ellipse cx="347" cy="109.500" rx="59" ry="34.500" strokeWidth="8" />
      <ellipse cx="90" cy="242" rx="61.500" ry="27" strokeWidth="7" />
    </svg>
  );
}

/* ---------- taskbar ---------- */

function Taskbar() {
  return (
    <nav className="flex h-10 shrink-0 items-center bg-[#05171c] text-white">
      <button aria-label="开始" className="flex h-10 w-12 shrink-0 items-center justify-center bg-[#080a0b]"><BsWindows size={16} /></button>
      <div className="flex h-10 w-[344px] shrink-0 items-center bg-[#f2f2f2] pr-3 pl-[9px]">
        <Svg w={22} h={22}><circle cx="11" cy="11" r="9" stroke="#111" strokeWidth="3" /></Svg>
        <input aria-label="搜索" placeholder="在这里输入你要搜索的内容" className="ml-[9px] min-w-0 flex-1 bg-transparent text-sm placeholder:text-[#444]" />
        <Svg w={16} h={18}><rect x="5.500" y="1.500" width="5" height="10" rx="1" stroke="#333" /><path d="M2.500 8v4q0 2 2 2h7q2 0 2-2V8M8 14v3M5 17h6" stroke="#333" /></Svg>
      </div>
      <div className="flex h-10 shrink-0 items-center">
        <button aria-label="任务视图" className="flex h-10 w-12 items-center justify-center">
          <Svg w={18} h={18}><path d="M1.500 1v3h10V1M1.500 17v-3h10v3M1.500 6.500h10v5h-10zM15.500 1v5M15.500 10v7" stroke="#fff" /><path d="M14 6h3v3h-3z" fill="#fff" /></Svg>
        </button>
        <button aria-label="浏览器" className="flex h-10 w-[52px] items-center justify-center">
          <Svg w={22} h={22}>
            <g fill="#e4e8ea"><rect x="1" y="1" width="11" height="11" rx="4.500" /><rect x="10" y="1" width="11" height="11" rx="4.500" /><rect x="1" y="10" width="11" height="11" rx="4.500" /><rect x="10" y="10" width="11" height="11" rx="4.500" /></g>
            <path d="M11 11C9 8 10 4 12 1M11 11c2 3 1 7-1 10M11 11c-3 2-7 1-10-1M11 11c3-2 7-1 10 1" stroke="#05171c" strokeWidth="1.200" />
          </Svg>
        </button>
        <button aria-label="IE" className="flex h-10 w-[50px] items-center justify-center text-[#e8ecee]"><FaInternetExplorer size={22} /></button>
        <button aria-label="G" className="flex h-10 w-[50px] items-center justify-center">
          <Svg w={20} h={20}><path d="M19 2c-3 1-5-.5-9-.5A8.500 8.500 0 1018.500 10H12M17 4C9 1 4 6 4.500 11c.5 4 5 6 8.500 4 3-2 2.500-5 1-6-3-2-6 0-5 2.500.5 1.500 2.500 1 3 0" stroke="#c4ccd0" strokeWidth="1.300" /></Svg>
        </button>
        <span className="mr-[18px] ml-2 h-4 w-[3px] border-x border-[#4a585d]" />
        <button aria-label="广联达" className="flex h-10 w-10 items-center justify-center border-b-2 border-[#76b9ed]"><AppIcon size={24} /></button>
        <button aria-label="画图" className="ml-[5px] flex h-10 w-12 items-center justify-center border-b-2 border-[#76b9ed] bg-[#37474d]">
          <Svg w={24} h={24}><path d="M0 0h12v12H0z" fill="#7fb8f4" /><path d="M12 0h12v12H12z" fill="#8fd694" /><path d="M0 12h12v12H0z" fill="#fcd9a8" /><path d="M12 12h12v12H12z" fill="#d5d2cc" /><path d="M1 0l12 12" stroke="#c8324a" strokeWidth="4" /><circle cx="12.500" cy="12" r="3" fill="#f01414" /><path d="M14 13v11l2.500-2.500L18 24l2-1-1.500-3H22z" fill="#fff" stroke="#222" strokeWidth=".8" /></Svg>
        </button>
      </div>
      <div className="ml-auto flex h-10 w-4 shrink-0 flex-col bg-[#f0f0f0]">
        <span className="flex h-[17px] items-center justify-center bg-[#dadada]"><Svg w={9} h={6}><path d="M1 5l3.500-4L8 5" stroke="#000" strokeWidth="1.800" /></Svg></span>
        <span className="mt-auto flex h-[17px] items-center justify-center"><Svg w={9} h={6}><path d="M1 1l3.500 4L8 1" stroke="#555" strokeWidth="1.800" /></Svg></span>
      </div>
      <span className="ml-3.5 h-4 w-1 border-x border-[#4a585d]" />
      <span className="ml-2.5 w-12">链接</span>
      <div className="flex w-[246px] shrink-0 items-center">
        <Svg w={16}><circle cx="4.500" cy="7" r="2.500" stroke="#fff" /><circle cx="11" cy="4" r="2.800" stroke="#fff" /><path d="M.5 15c0-7 8-7 8 0M7.500 9c3-3 7-1 7.500 3" stroke="#fff" /></Svg>
        <Svg w={13} h={8} className="ml-[21px]"><path d="M1 7l5.500-5.500L12 7" stroke="#fff" strokeWidth="1.300" /></Svg>
        <Svg className="ml-[9px]"><circle cx="8" cy="8" r="8" fill="#f59a48" /><path d="M2.500 6.500h2L8 4v8l-3.500-2.500h-2zM10 6q1.500 2 0 4M12 4.500q2.500 3.500 0 7" stroke="#fff" /></Svg>
        <FaBell size={13} className="ml-[9px] shrink-0" />
        <Svg w={18} h={14} className="ml-[9px]"><path d="M5.500 4.500h10v7h-8M15.500 7h1v2h-1" stroke="#fff" /><path d="M8 6h6v4H8z" fill="#fff" /><path d="M1 1v2M5 1v2M0 3.500h6M1 4v2l2 1.500L5 6V4M3 7v6h3" stroke="#fff" /></Svg>
        <Svg w={14} h={14} className="ml-[9px]"><path d="M1 13C1 6 6 1 13 1M4 13c0-5 4-9 9-9M7 13c0-3 3-6 6-6" stroke="#a9b3b7" strokeWidth="1.300" /><circle cx="11.500" cy="12" r="1.800" fill="#fff" /></Svg>
        <Svg w={24} h={14} className="ml-[9px]"><rect x=".5" y=".5" width="22" height="12" stroke="#fff" /><path d="M3 3.500h18M3 6.500h18" stroke="#fff" strokeDasharray="2 1" /><path d="M5 9.500h13" stroke="#fff" /></Svg>
        <span className="ml-[9px]">中</span>
        <span className="ml-[14px]"><SogouLogo size={16} /></span>
      </div>
      <div className="mr-5 mb-0.5 w-[60px] shrink-0 text-center leading-[19px]">11:57<br />2018/8/28</div>
      <div className="flex w-10 shrink-0">
        <Svg w={26} h={24}>
          <path d="M0 1h17v13h-9l-4 4v-4H0z" fill="#fff" /><path d="M3 4.500h11M3 7.500h11M3 10.500h7" stroke="#05171c" />
          <circle cx="16" cy="15" r="8" fill="#3a4246" stroke="#8a9296" />
          <text x="16" y="19" textAnchor="middle" fill="#fff" className="text-[11px] font-bold">3</text>
        </Svg>
      </div>
    </nav>
  );
}

export default function App() {
  return (
    <div className="relative flex h-screen flex-col overflow-hidden bg-[#f0f0f0] font-['Open_Sans','Noto_Sans_CJK_SC',sans-serif] text-xs leading-4 text-black">
      <TitleBar />
      <AccountRow />
      <MainToolbar />
      <div className="flex min-h-0 flex-1 pb-[3px]">
        <NavPanel />
        <WorkArea />
      </div>
      <StatusBar />
      <Taskbar />

      {/* windows over the desktop */}
      <PolygonEditor />
      <GridDialog />
      <ImeBar />
      <Ball />
      <Marks />
    </div>
  );
}
